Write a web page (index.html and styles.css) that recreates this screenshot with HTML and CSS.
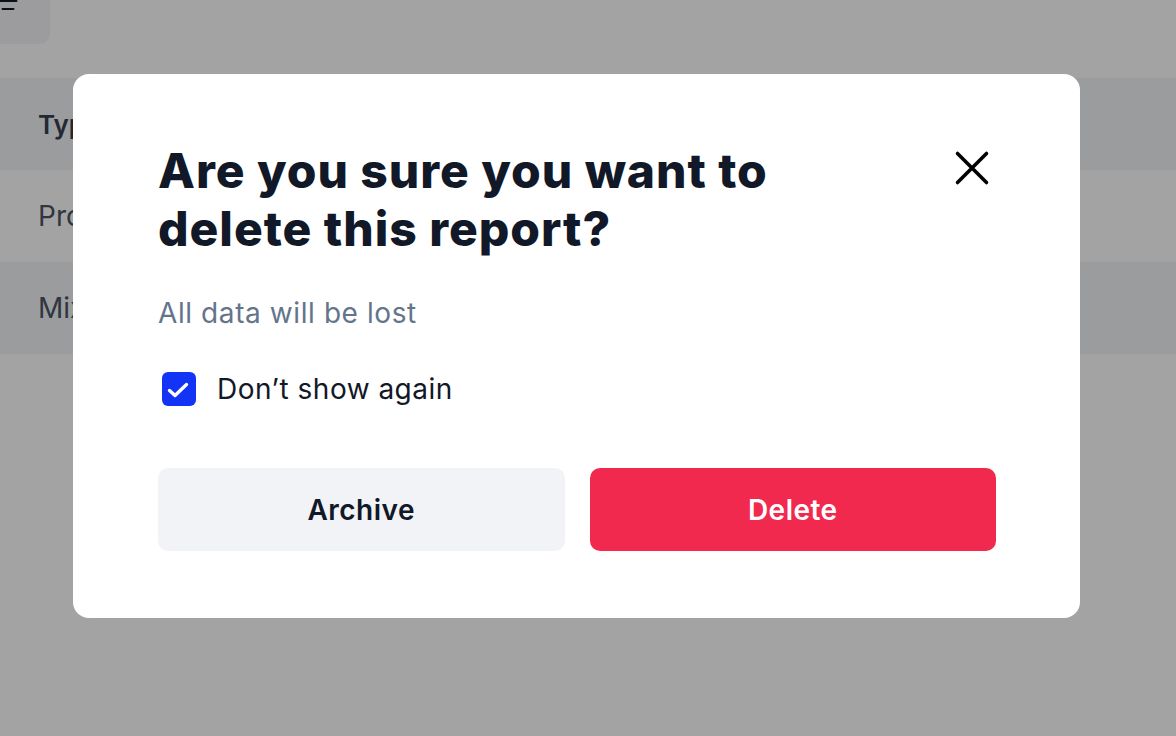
FILE: index.html
```html
<!DOCTYPE html>
<html lang="en">
<head>
<meta charset="utf-8">
<title>Delete report</title>
<link rel="stylesheet" href="styles.css">
</head>
<body>
<div class="page">
  <div class="toolbar">
    <button class="filter-btn" type="button" aria-label="Filter">
      <svg width="24" height="20" viewBox="0 0 24 20" aria-hidden="true">
        <path d="M0 2H24M3.5 11H20.5M6.5 19H17.5" stroke="#111827" stroke-width="2" stroke-linecap="round"/>
      </svg>
    </button>
  </div>
  <table class="table">
    <thead>
      <tr><th>Type</th><th>Name</th><th>Date</th></tr>
    </thead>
    <tbody>
      <tr><td>Product</td><td>Quarterly report</td><td>Jan 12</td></tr>
      <tr class="striped"><td>Mixed</td><td>Annual summary</td><td>Feb 03</td></tr>
    </tbody>
  </table>
</div>

<div class="overlay">
  <div class="modal" role="dialog" aria-modal="true">
    <div class="modal-head">
      <h2 class="modal-title">Are you sure you want to delete this report?</h2>
      <button class="close-btn" type="button" aria-label="Close">
        <svg width="36" height="36" viewBox="0 0 36 36" aria-hidden="true">
          <path d="M3.5 3.5L32.5 32.5M32.5 3.5L3.5 32.5" stroke="#000" stroke-width="3.6" stroke-linecap="round"/>
        </svg>
      </button>
    </div>
    <p class="modal-sub">All data will be lost</p>
    <label class="check-row">
      <span class="checkbox">
        <svg width="34" height="34" viewBox="0 0 34 34" aria-hidden="true">
          <path d="M7.5 18.5L13 23.5L24.5 12.5" fill="none" stroke="#fff" stroke-width="3.4" stroke-linecap="round" stroke-linejoin="round"/>
        </svg>
      </span>
      <span class="check-label">Don’t show again</span>
    </label>
    <div class="actions">
      <button class="btn btn-archive" type="button">Archive</button>
      <button class="btn btn-delete" type="button">Delete</button>
    </div>
  </div>
</div>
</body>
</html>
```

FILE: styles.css
```css
* { box-sizing: border-box; }

html, body {
  margin: 0;
  padding: 0;
  height: 100%;
  overflow: hidden;
}

body {
  font-family: "Inter", "Noto Sans", "Liberation Sans", sans-serif;
  letter-spacing: 0.03em;
  background: #ffffff;
  color: #111827;
}

.page {
  width: 1176px;
  height: 736px;
}

.toolbar {
  display: flow-root;
  height: 78px;
}

.filter-btn {
  display: flex;
  align-items: flex-start;
  justify-content: flex-start;
  width: 80px;
  height: 60px;
  margin: -16px 0 0 -30px;
  padding: 6px 0 0 26px;
  border: none;
  border-radius: 10px;
  background: #f4f5f7;
}

.table {
  width: 100%;
  border-collapse: collapse;
  font-size: 28px;
  letter-spacing: 0;
  color: #4b5563;
}

.table th,
.table td {
  height: 92px;
  padding: 0 0 0 38px;
  text-align: left;
  vertical-align: middle;
}

.table th {
  font-size: 26px;
  font-weight: 600;
  color: #374151;
}

.table thead tr {
  background: #f3f4f6;
}

.table .striped {
  background: #f3f4f6;
}

.overlay {
  position: fixed;
  inset: 0;
  background: rgba(0, 0, 0, 0.36);
}

.modal {
  position: absolute;
  left: 73px;
  top: 74px;
  width: 1007px;
  height: 544px;
  padding: 68px 84px 67px 85px;
  background: #ffffff;
  border-radius: 16px;
  display: flex;
  flex-direction: column;
}

.modal-head {
  display: flex;
  align-items: flex-start;
  justify-content: space-between;
}

.modal-title {
  margin: 0;
  width: 700px;
  font-size: 48px;
  line-height: 58px;
  font-weight: 800;
  letter-spacing: 0.02em;
  color: #111827;
}

.close-btn {
  display: flex;
  margin: 8px 6px 0 0;
  padding: 0;
  border: none;
  background: none;
}

.modal-sub {
  margin: 38px 0 0;
  font-size: 28px;
  line-height: 34px;
  letter-spacing: 0.021em;
  color: #64748b;
}

.check-row {
  display: flex;
  align-items: center;
  gap: 21px;
  margin-top: 42px;
  height: 34px;
}

.checkbox {
  display: flex;
  width: 34px;
  height: 34px;
  margin-left: 4px;
  border-radius: 6px;
  background: #1434f5;
}

.check-label {
  font-size: 28px;
  line-height: 34px;
  color: #111827;
}

.actions {
  display: grid;
  grid-template-columns: 1fr 1fr;
  gap: 25px;
  margin-top: 62px;
}

.btn {
  height: 83px;
  border: none;
  border-radius: 10px;
  font-family: inherit;
  letter-spacing: inherit;
  font-size: 28px;
  font-weight: 600;
}

.btn-archive {
  background: #f2f3f7;
  color: #111827;
}

.btn-delete {
  background: #f2294f;
  color: #ffffff;
}
```
